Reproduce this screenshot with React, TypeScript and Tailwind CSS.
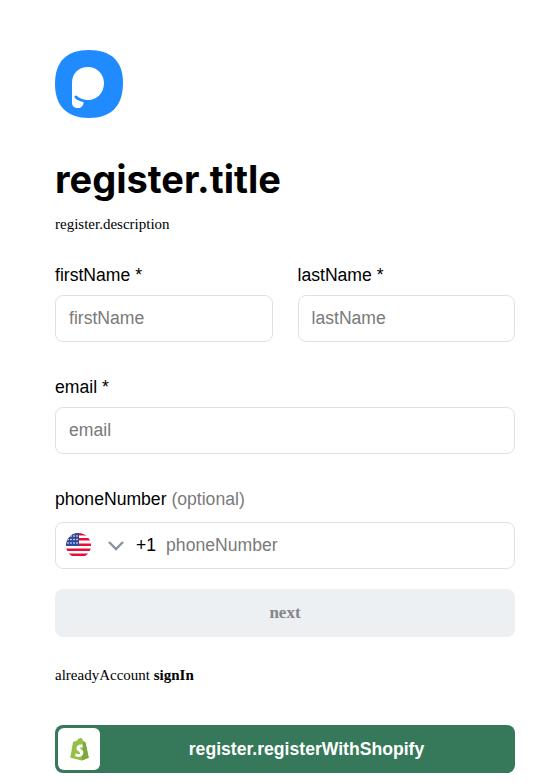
import React from "react";

const inputCls =
  "h-[47px] w-full rounded-lg border border-[#dfe1e6] bg-white px-[13px] text-[17.6px] text-black outline-none placeholder:text-[#7a7a7a] font-['Liberation_Sans',sans-serif]";
const labelCls = "block mb-[10px] h-[20px] leading-[20px] text-[17.6px] text-black font-['Liberation_Sans',sans-serif]";

function Logo() {
  return (
    <svg width="68" height="68" viewBox="0 0 68 68" className="block">
      <path d="M34 0C56 0 68 11 68 33C68 56 56 68 34 68C12 68 0 56 0 34C0 11 12 0 34 0Z" fill="#1f8bff" />
      <path
        d="M17 33C17 23 24 17 33 17C42 17 49 24 49 33C49 43 42 50 33 50C29 50 25 48.500 22 46C20.500 44.500 18.500 46.500 20 48C22 50 25 51.500 28.500 52C28.500 56 26 58 23 58C19.500 58 17 56 17 53Z"
        fill="#ffffff"
      />
    </svg>
  );
}

function Flag() {
  return (
    <svg width="25" height="25" viewBox="0 0 25 25" className="block shrink-0">
      <defs>
        <clipPath id="flag-circle">
          <circle cx="12.500" cy="12.500" r="12.500" />
        </clipPath>
      </defs>
      <g clipPath="url(#flag-circle)">
        <rect width="25" height="25" fill="#ffffff" />
        <rect y="0" width="25" height="2.500" fill="#e5103a" />
        <rect y="5" width="25" height="2.500" fill="#e5103a" />
        <rect y="10.500" width="25" height="2.500" fill="#e5103a" />
        <rect y="15.500" width="25" height="2.500" fill="#e5103a" />
        <rect y="20.500" width="25" height="2.500" fill="#e5103a" />
        <rect width="13" height="13" fill="#2d4a9e" />
        {[3, 6.500, 10].map((y) =>
          [2, 5, 8, 11].map((x) => <circle key={`${x}-${y}`} cx={x} cy={y} r="0.800" fill="#ffffff" />)
        )}
      </g>
    </svg>
  );
}

function ShopifyBag() {
  return (
    <svg width="21" height="24" viewBox="0 0 22 26" className="block">
      <path d="M1 22.500L4 5.500L9 3.500C10 1 12 0.500 13.500 1.500L15.500 4.500L17.500 6L21 22.500L13.500 25.500Z" fill="#95bf47" />
      <path d="M15.500 4.500L17.500 6L21 22.500L13.500 25.500L15 5Z" fill="#7fa83c" />
      <path d="M7 5C7.500 2.500 9.500 1 11 1.500" fill="none" stroke="#dcebb8" strokeWidth="0.800" />
      <path
        d="M14.500 8.500C12 7.500 8 8.500 7.700 12C7.500 15.500 11.700 15.500 11.500 17.500C11.300 18.800 9 18.800 6.800 17.500L6.200 20.500C10 22.500 14.800 21.500 15.200 17C15.500 13.800 11.300 13.300 11.500 12C11.600 11.200 12.800 11.200 14 11.800Z"
        fill="#ffffff"
      />
    </svg>
  );
}

export default function App() {
  return (
    <div className="min-h-[783px] w-[536px] bg-white pl-[55px] pr-[21px] pt-[50px] font-['Liberation_Serif',serif] text-black">
      <Logo />
      <h1 className="mt-[36px] h-[50px] text-[38px] font-bold leading-[50px] font-['Inter',sans-serif]">register.title</h1>
      <p className="mt-[12px] h-[17px] text-[15px] leading-[17px]">register.description</p>

      <div className="mt-[32px] flex gap-[25px]">
        <div className="flex-1">
          <label className={labelCls}>firstName *</label>
          <input className={inputCls} placeholder="firstName" />
        </div>
        <div className="flex-1">
          <label className={labelCls}>lastName *</label>
          <input className={inputCls} placeholder="lastName" />
        </div>
      </div>

      <div className="mt-[35px]">
        <label className={labelCls}>email *</label>
        <input className={inputCls} placeholder="email" />
      </div>

      <div className="mt-[35px]">
        <label className="mb-[13px] block h-[20px] text-[17.6px] leading-[20px] font-['Liberation_Sans',sans-serif]">
          phoneNumber <span className="text-[#7a7a7a]">(optional)</span>
        </label>
        <div className="flex h-[47px] items-center rounded-lg border border-[#dfe1e6] pl-[10px] font-['Liberation_Sans',sans-serif]">
          <Flag />
          <svg width="18" height="11" viewBox="0 0 18 11" className="ml-[16px] shrink-0">
            <path d="M2 2L9 9L16 2" fill="none" stroke="#8a93a3" strokeWidth="2.400" />
          </svg>
          <span className="ml-[11px] text-[17.6px]">+1</span>
          <input className="ml-[10px] min-w-0 flex-1 bg-transparent text-[17.6px] outline-none placeholder:text-[#7a7a7a]" placeholder="phoneNumber" />
        </div>
      </div>

      <button className="mt-[20px] h-[48px] w-full rounded-lg bg-[#edf0f3] text-[17px] font-bold text-[#858585]">next</button>

      <p className="mt-[30px] h-[17px] text-[15px] leading-[17px]">
        alreadyAccount <span className="font-bold">signIn</span>
      </p>

      <button className="mt-[41px] flex h-[48px] w-full items-center rounded-lg bg-[#35795a] p-[3px] text-white">
        <span className="flex h-[42px] w-[42px] shrink-0 items-center justify-center rounded-md bg-white">
          <ShopifyBag />
        </span>
        <span className="flex-1 pl-[1px] text-center text-[17.6px] font-bold font-['Liberation_Sans',sans-serif]">register.registerWithShopify</span>
      </button>
    </div>
  );
}
